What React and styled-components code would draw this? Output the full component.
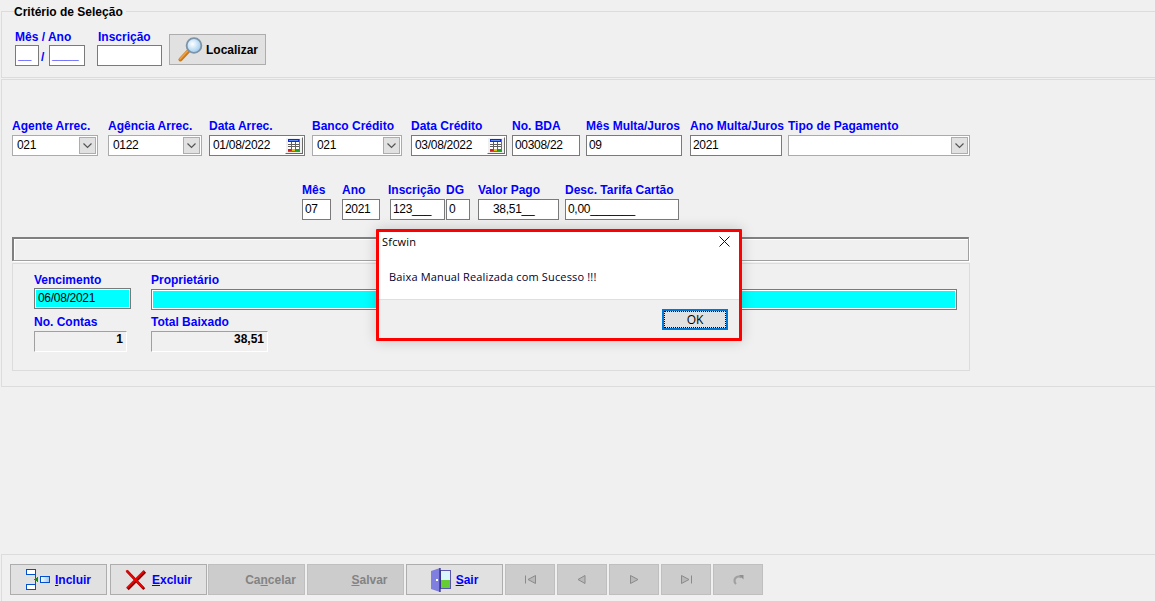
import React from 'react';
import styled, { createGlobalStyle } from 'styled-components';

const GlobalStyle = createGlobalStyle`
  html, body {
    margin: 0;
    padding: 0;
    background: #f0f0f0;
  }
  * {
    box-sizing: border-box;
  }
`;

const Page = styled.div`
  position: relative;
  display: flex;
  flex-direction: column;
  width: 1155px;
  height: 601px;
  overflow: hidden;
  background: #f0f0f0;
  font-family: "Liberation Sans", Arial, sans-serif;
  font-size: 12px;
  color: #000;
`;

const CriteriaGroup = styled.fieldset`
  height: 74px;
  margin: 4px -4px 0 1px;
  padding: 0 0 0 12px;
  border: 1px solid #dcdcdc;
  min-width: 0;
`;

const CriteriaTitle = styled.legend`
  padding: 2px 3px 0 0;
  margin-left: 0;
  font-size: 12px;
  font-weight: bold;
  line-height: 13px;
`;

const CriteriaRow = styled.div`
  display: flex;
  align-items: flex-start;
  margin-top: 11px;
`;

const Field = styled.div`
  display: flex;
  flex-direction: column;
  flex: none;
  width: ${(p) => p.$w}px;
  margin-left: ${(p) => p.$ml || 0}px;
`;

const Label = styled.label`
  display: block;
  height: 15px;
  line-height: ${(p) => p.$lh || 12}px;
  font-size: 12px;
  font-weight: bold;
  color: #0000ff;
  white-space: nowrap;
  margin-left: ${(p) => p.$ml || 0}px;
`;

const TextBox = styled.div`
  height: 21px;
  padding-left: ${(p) => p.$pl ?? 2}px;
  border: 1px solid #7a7a7a;
  background: #fff;
  line-height: 19px;
  font-size: 12px;
  letter-spacing: -0.3px;
  white-space: nowrap;
  overflow: hidden;
  color: #000;
`;

const BlankBox = styled(TextBox)`
  font-weight: bold;
  letter-spacing: 0;
  color: #0000ff;
`;

const Combo = styled.div`
  display: flex;
  align-items: center;
  justify-content: space-between;
  height: 21px;
  padding: 0 1px 0 4px;
  border: 1px solid #ababab;
  background: #fff;
  line-height: 19px;
  letter-spacing: -0.3px;
`;

const ComboArrow = styled.span`
  display: flex;
  align-items: center;
  justify-content: center;
  width: 17px;
  height: 17px;
  background: #e1e1e1;
  border: 1px solid #adadad;
`;

const DateBox = styled(TextBox)`
  display: flex;
  align-items: center;
  justify-content: space-between;
  padding-left: 3px;
  padding-right: 1px;
`;

const CalendarButton = styled.span`
  display: flex;
  align-items: center;
  justify-content: center;
  width: 18px;
  height: 17px;
  background: #f0f0f0;
  border-top: 1px solid #fff;
  border-left: 1px solid #fff;
  border-right: 1px solid #696969;
  border-bottom: 1px solid #696969;
`;

const Slash = styled.span`
  flex: none;
  width: 10px;
  margin-top: 20px;
  padding-left: 2px;
  font-size: 12px;
  font-weight: bold;
  color: #0000ff;
`;

const FindButton = styled.button`
  display: flex;
  align-items: center;
  flex: none;
  width: 97px;
  height: 31px;
  margin: 4px 0 0 7px;
  padding: 0 0 0 8px;
  gap: 2px;
  border: 1px solid #adadad;
  background: #e1e1e1;
  font: bold 12px "Liberation Sans", Arial, sans-serif;
  color: #000;
`;

const DataGroup = styled.section`
  height: 308px;
  margin: 1px -4px 0 1px;
  padding: 40px 0 0 10px;
  border: 1px solid #dcdcdc;
`;

const FieldRow = styled.div`
  display: flex;
  padding-left: ${(p) => p.$pl || 0}px;
  margin-top: ${(p) => p.$mt || 0}px;
`;

const StatusBar = styled.div`
  width: 957px;
  height: 24px;
  margin-top: 17px;
  border-top: 2px solid #808080;
  border-left: 2px solid #808080;
  border-right: 1px solid #a0a0a0;
  border-bottom: 1px solid #a0a0a0;
  box-shadow: inset 1px 1px 0 #fff, 1px 1px 0 #fff;
`;

const ResultPanel = styled.div`
  width: 958px;
  height: 108px;
  margin-top: 2px;
  padding: 9px 0 0 21px;
  border: 1px solid #dcdcdc;
`;

const PanelRow = styled.div`
  display: flex;
  margin-top: ${(p) => p.$mt || 0}px;
`;

const CyanBox = styled(TextBox)`
  background: #00ffff;
  box-shadow: inset 0 0 0 1px #fff;
  padding-left: ${(p) => p.$pl ?? 3}px;
  margin-top: ${(p) => p.$mt || 0}px;
`;

const TotalBox = styled.div`
  height: 21px;
  padding-right: 3px;
  border-top: 1px solid #a0a0a0;
  border-left: 1px solid #a0a0a0;
  border-right: 1px solid #fff;
  border-bottom: 1px solid #fff;
  text-align: right;
  font-size: 12px;
  font-weight: bold;
  line-height: 15px;
`;

const Toolbar = styled.footer`
  display: flex;
  height: 47px;
  margin: auto -4px 0 1px;
  padding: 9px 0 0 8px;
  border-top: 1px solid #dcdcdc;
  border-left: 1px solid #dcdcdc;
`;

const ToolButton = styled.button`
  display: flex;
  align-items: center;
  justify-content: center;
  flex: none;
  gap: ${(p) => p.$gap ?? 4}px;
  width: ${(p) => p.$w || 97}px;
  height: 31px;
  margin-left: ${(p) => p.$ml ?? 2}px;
  padding: 0;
  border: 1px solid ${(p) => (p.disabled ? '#bfbfbf' : '#adadad')};
  background: ${(p) => (p.disabled ? '#cccccc' : '#e1e1e1')};
  font: bold 12px "Liberation Sans", Arial, sans-serif;
  color: ${(p) => (p.disabled ? '#838383' : '#0000ff')};
`;

const IconSlot = styled.span`
  display: block;
  flex: none;
  width: ${(p) => p.$w}px;
  height: 24px;
`;

const Dialog = styled.div`
  position: absolute;
  left: 376px;
  top: 229px;
  display: flex;
  flex-direction: column;
  width: 366px;
  height: 112px;
  border: 3px solid #ff0000;
  border-radius: 1px;
  background: #fff;
  box-shadow: 0 0 14px rgba(0, 0, 0, 0.18);
  font-family: "Open Sans", "Noto Sans", sans-serif;
`;

const DialogTitle = styled.div`
  display: flex;
  align-items: center;
  justify-content: space-between;
  height: 18px;
  padding: 0 9px 0 3px;
  font-size: 11px;
  letter-spacing: 0.2px;
  color: #000;
`;

const DialogBody = styled.div`
  flex: 1;
  padding: 18px 0 0 10px;
  font-size: 11px;
  line-height: 18px;
  letter-spacing: 0.16px;
  color: #000033;
  white-space: nowrap;
`;

const DialogFooter = styled.div`
  display: flex;
  justify-content: flex-end;
  height: 39px;
  padding: 9px 11px 0 0;
  background: #f0f0f0;
  border-top: 1px solid #dfdfdf;
`;

const OkButton = styled.button`
  width: 66px;
  height: 21px;
  padding: 0;
  border: 2px solid #0078d7;
  outline: 1px dotted #000;
  outline-offset: -3px;
  background: #e1e1e1;
  font: 12px "Open Sans", "Noto Sans", sans-serif;
  color: #000;
`;

const Chevron = () => (
  <svg width="9" height="6" viewBox="0 0 9 6">
    <path d="M0.5 0.5 L4.5 4.5 L8.5 0.5" fill="none" stroke="#555" strokeWidth="1.2" />
  </svg>
);

const CalendarIcon = () => (
  <svg width="12" height="13" viewBox="0 0 12 13" shapeRendering="crispEdges">
    <rect x="0" y="0" width="12" height="13" fill="#808000" />
    <rect x="0" y="0" width="11" height="3" fill="#0a28e0" />
    <rect x="1" y="1" width="9" height="1" fill="#5a8cff" />
    <rect x="0" y="3" width="11" height="9" fill="#fff" />
    <path d="M0 5.5h11M0 7.5h11M3.5 3v9M7.5 3v9" stroke="#606060" strokeWidth="1" />
    <rect x="0" y="10" width="3" height="2" fill="#d02020" />
    <rect x="4" y="10" width="3" height="2" fill="#e0c000" />
    <rect x="8" y="10" width="3" height="2" fill="#20a020" />
  </svg>
);

const MagnifierIcon = () => (
  <svg width="26" height="25" viewBox="0 0 26 25">
    <defs>
      <radialGradient id="lens" cx="0.4" cy="0.4" r="0.7">
        <stop offset="0" stopColor="#ffffff" />
        <stop offset="1" stopColor="#8fc4ee" />
      </radialGradient>
    </defs>
    <path d="M2.5 22.5 L10 14.5" stroke="#c77a1f" strokeWidth="4" strokeLinecap="round" />
    <path d="M2 22 L9.5 14" stroke="#f4a23c" strokeWidth="1.6" strokeLinecap="round" />
    <circle cx="16" cy="8.5" r="7.4" fill="url(#lens)" stroke="#7d93a8" strokeWidth="1.8" />
  </svg>
);

const IncludeIcon = () => (
  <svg width="25" height="22" viewBox="0 0 25 22" shapeRendering="crispEdges">
    <defs>
      <linearGradient id="box" x1="0" x2="1" y1="0" y2="0">
        <stop offset="0" stopColor="#ffffff" />
        <stop offset="1" stopColor="#9cc4f0" />
      </linearGradient>
    </defs>
    <rect x="0.5" y="0.5" width="9" height="5" fill="#fff" stroke="#0050d0" />
    <rect x="0.5" y="15.5" width="9" height="5" fill="#fff" stroke="#0050d0" />
    <path d="M9.5 5v10" stroke="#0050d0" />
    <path d="M8 10.5 L12 7.5 V13.5 Z" fill="#1e8a1e" />
    <rect x="14.5" y="7.5" width="9" height="6" fill="url(#box)" stroke="#0050d0" />
  </svg>
);

const DeleteIcon = () => (
  <svg width="22" height="22" viewBox="0 0 24 24">
    <path d="M2 2 L21 22" stroke="#8c0000" strokeWidth="3" />
    <path d="M22 3 L3 22" stroke="#8c0000" strokeWidth="3" />
    <path d="M1.5 1.5 L20 20.5" stroke="#f00000" strokeWidth="2.2" />
    <path d="M21 2 L2 21" stroke="#f00000" strokeWidth="2.2" />
  </svg>
);

const DoorIcon = () => (
  <svg width="20" height="24" viewBox="0 0 20 24">
    <rect x="9.5" y="2.5" width="10" height="18" fill="#d8f6fb" stroke="#5a55b0" />
    <rect x="10" y="12" width="9" height="8" fill="#66cc33" />
    <path d="M0 3 L9 0 V24 L0 21 Z" fill="#7f7fe0" />
    <path d="M9 0 V24" stroke="#20207a" strokeWidth="1.2" />
    <rect x="5" y="11" width="2" height="2" fill="#fff" />
  </svg>
);

const navPaths = {
  first: (
    <>
      <path d="M0.5 0.5v8" fill="none" />
      <path d="M10.5 0.5v8L3 4.5z" fill="#b8b8b8" />
    </>
  ),
  prev: <path d="M8 0.5v8L1 4.5z" fill="#b8b8b8" />,
  next: <path d="M1.5 0.5v8L9 4.5z" fill="#b8b8b8" />,
  last: (
    <>
      <path d="M0.5 0.5v8L8 4.5z" fill="#b8b8b8" />
      <path d="M10.5 0.5v8" fill="none" />
    </>
  ),
};

const NavIcon = ({ name }) => (
  <svg width="11" height="9" viewBox="0 0 11 9" stroke="#8a8a8a" strokeWidth="1">
    {navPaths[name]}
  </svg>
);

const RetryIcon = () => (
  <svg width="12" height="12" viewBox="0 0 12 12">
    <path d="M9.5 3.5 A4 4 0 1 0 4 10" fill="none" stroke="#a0a0a0" strokeWidth="2.2" />
    <path d="M7 1 L11.5 1 V5.5 Z" fill="#8f8f8f" />
  </svg>
);

const CloseIcon = () => (
  <svg width="11" height="11" viewBox="0 0 11 11">
    <path d="M0.5 0.5 L10.5 10.5 M10.5 0.5 L0.5 10.5" stroke="#111" strokeWidth="1" />
  </svg>
);

const topFields = [
  { label: 'Agente Arrec.', w: 86, kind: 'combo', value: '021' },
  { label: 'Agência Arrec.', w: 94, ml: 10, kind: 'combo', value: '0122' },
  { label: 'Data Arrec.', w: 96, ml: 7, kind: 'date', value: '01/08/2022' },
  { label: 'Banco Crédito', w: 90, ml: 7, kind: 'combo', value: '021' },
  { label: 'Data Crédito', w: 96, ml: 9, kind: 'date', value: '03/08/2022' },
  { label: 'No. BDA', w: 68, ml: 5, value: '00308/22' },
  { label: 'Mês Multa/Juros', w: 96, ml: 6, value: '09' },
  { label: 'Ano Multa/Juros', w: 92, ml: 8, value: '2021' },
  { label: 'Tipo de Pagamento', w: 182, ml: 6, kind: 'combo', value: '' },
];

const entryFields = [
  { label: 'Mês', w: 29, value: '07' },
  { label: 'Ano', w: 38, ml: 11, value: '2021' },
  { label: 'Inscrição', w: 55, ml: 10, value: '123___', labelMl: -2 },
  { label: 'DG', w: 24, ml: 1, value: '0' },
  { label: 'Valor Pago', w: 81, ml: 8, value: '38,51__', pl: 14 },
  { label: 'Desc. Tarifa Cartão', w: 114, ml: 6, value: '0,00_______' },
];

const actions = [
  { letter: 'I', rest: 'ncluir', icon: <IncludeIcon />, ml: 0 },
  { letter: 'E', rest: 'xcluir', icon: <DeleteIcon />, ml: 3, gap: 5 },
  { before: 'Ca', letter: 'n', rest: 'celar', slot: 24, disabled: true, ml: 1 },
  { letter: 'S', rest: 'alvar', slot: 24, disabled: true },
  { letter: 'S', rest: 'air', icon: <DoorIcon />, gap: 5 },
];

const navButtons = ['first', 'prev', 'next', 'last'];

function DataField({ field }) {
  const { label, labelMl, w, ml, kind, value, pl } = field;
  let control = <TextBox $pl={pl}>{value}</TextBox>;
  if (kind === 'combo') {
    control = (
      <Combo>
        <span>{value}</span>
        <ComboArrow>
          <Chevron />
        </ComboArrow>
      </Combo>
    );
  }
  if (kind === 'date') {
    control = (
      <DateBox>
        <span>{value}</span>
        <CalendarButton>
          <CalendarIcon />
        </CalendarButton>
      </DateBox>
    );
  }
  return (
    <Field $w={w} $ml={ml}>
      <Label $ml={labelMl}>{label}</Label>
      {control}
    </Field>
  );
}

export default function App() {
  return (
    <Page>
      <GlobalStyle />

      <CriteriaGroup>
        <CriteriaTitle>Critério de Seleção</CriteriaTitle>
        <CriteriaRow>
          <Field $w={24} $ml={1}>
            <Label $lh={14}>Mês / Ano</Label>
            <BlankBox>__</BlankBox>
          </Field>
          <Slash>/</Slash>
          <Field $w={36}>
            <Label $lh={14}>&nbsp;</Label>
            <BlankBox>____</BlankBox>
          </Field>
          <Field $w={65} $ml={12}>
            <Label $lh={14} $ml={1}>Inscrição</Label>
            <TextBox />
          </Field>
          <FindButton>
            <MagnifierIcon />
            Localizar
          </FindButton>
        </CriteriaRow>
      </CriteriaGroup>

      <DataGroup>
        <FieldRow>
          {topFields.map((field) => (
            <DataField key={field.label} field={field} />
          ))}
        </FieldRow>

        <FieldRow $pl={290} $mt={28}>
          {entryFields.map((field) => (
            <DataField key={field.label} field={field} />
          ))}
        </FieldRow>

        <StatusBar />

        <ResultPanel>
          <PanelRow>
            <Field $w={97}>
              <Label $lh={14}>Vencimento</Label>
              <CyanBox>06/08/2021</CyanBox>
            </Field>
            <Field $w={806} $ml={20}>
              <Label $lh={14}>Proprietário</Label>
              <CyanBox $mt={1} />
            </Field>
          </PanelRow>
          <PanelRow $mt={6}>
            <Field $w={93}>
              <Label>No. Contas</Label>
              <TotalBox>1</TotalBox>
            </Field>
            <Field $w={117} $ml={24}>
              <Label>Total Baixado</Label>
              <TotalBox>38,51</TotalBox>
            </Field>
          </PanelRow>
        </ResultPanel>
      </DataGroup>

      <Toolbar>
        {actions.map((action) => (
          <ToolButton
            key={action.rest}
            disabled={action.disabled}
            $ml={action.ml}
            $gap={action.gap}
          >
            {action.icon || <IconSlot $w={action.slot} />}
            <span>
              {action.before}
              <u>{action.letter}</u>
              {action.rest}
            </span>
          </ToolButton>
        ))}
        {navButtons.map((name) => (
          <ToolButton key={name} disabled $w={50}>
            <NavIcon name={name} />
          </ToolButton>
        ))}
        <ToolButton disabled $w={50}>
          <RetryIcon />
        </ToolButton>
      </Toolbar>

      <Dialog>
        <DialogTitle>
          <span>Sfcwin</span>
          <CloseIcon />
        </DialogTitle>
        <DialogBody>Baixa Manual Realizada com Sucesso !!!</DialogBody>
        <DialogFooter>
          <OkButton>OK</OkButton>
        </DialogFooter>
      </Dialog>
    </Page>
  );
}
